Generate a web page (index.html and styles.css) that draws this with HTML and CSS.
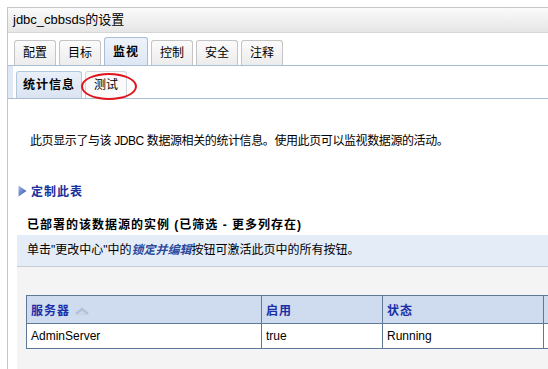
FILE: index.html
```html
<!DOCTYPE html>
<html lang="zh-CN">
  <head>
    <meta charset="UTF-8" />
    <title>jdbc_cbbsds的设置</title>
    <link rel="stylesheet" href="styles.css">
  </head>
  <body>
    <div class="frame">
      <div class="title_bar">jdbc_cbbsds的设置</div>
      <div class="tabs">
        <div class="tab">配置</div>
        <div class="tab">目标</div>
        <div class="tab active">监视</div>
        <div class="tab">控制</div>
        <div class="tab">安全</div>
        <div class="tab">注释</div>
      </div>
      <div class="subtabs">
        <div class="subtab active">统计信息</div>
        <div class="subtab">测试<span class="circle"></span></div>
      </div>
      <p class="intro">此页显示了与该 JDBC 数据源相关的统计信息。使用此页可以监视数据源的活动。</p>
      <div class="customize">
        <svg width="9" height="12" viewBox="0 0 9 12">
          <defs>
            <linearGradient id="arrow" x1="0" y1="0" x2="1" y2="1">
              <stop offset="0" stop-color="#a8c0ea" />
              <stop offset="1" stop-color="#2448a8" />
            </linearGradient>
          </defs>
          <path d="M0.5 0.5 L8.5 6 L0.5 11.5 Z" fill="url(#arrow)" />
        </svg>
        <span>定制此表</span>
      </div>
      <h2 class="section_title">已部署的该数据源的实例 (已筛选 - 更多列存在)</h2>
      <div class="info_bar">单击"更改中心"中的<em>锁定并编辑</em>按钮可激活此页中的所有按钮。</div>
      <div class="table_area">
        <table class="grid">
          <thead>
            <tr>
              <th class="c1">服务器 <svg width="16" height="10" viewBox="0 0 16 10"><path d="M2 7 L8 2 L14 7" fill="none" stroke="#b4c0d6" stroke-width="2.4" /><path d="M5 8.5 L8 6 L11 8.5" fill="none" stroke="#c8d2e4" stroke-width="1.5" /></svg></th>
              <th class="c2">启用</th>
              <th class="c3">状态</th>
              <th class="c4">连接</th>
            </tr>
          </thead>
          <tbody>
            <tr>
              <td>AdminServer</td>
              <td>true</td>
              <td>Running</td>
              <td>0</td>
            </tr>
          </tbody>
        </table>
      </div>
    </div>
  </body>
</html>
```

FILE: styles.css
```css
body {
  margin: 0;
  background-color: #fff;
  font-family: "Liberation Sans", "Noto Sans CJK SC", sans-serif;
  font-size: 12px;
  color: #000;
  overflow: hidden;
}
.frame {
  margin: 7px 0 0 7px;
  border-left: 1px solid #c4c4c4;
  border-top: 1px solid #c8c8c8;
  height: 362px;
}
.title_bar {
  height: 24px;
  line-height: 24px;
  padding-left: 5px;
  font-size: 13px;
  background: linear-gradient(#fafafa, #e6e6e6);
  border-bottom: 1px solid #d6d6d6;
}
.tabs {
  display: flex;
  align-items: flex-end;
  height: 32px;
  padding-left: 6px;
}
.tab {
  height: 24px;
  line-height: 24px;
  padding: 0 8px;
  margin-right: 3px;
  border: 1px solid #c4c4c4;
  border-bottom: none;
  border-radius: 3px 3px 0 0;
  background: linear-gradient(#fbfbfb, #ececec);
}
.tab.active {
  height: 27px;
  line-height: 28px;
  font-weight: bold;
  letter-spacing: 1px;
  background: linear-gradient(#eef3fa, #dde7f3);
  border-color: #a9bed6;
}
.subtabs {
  position: relative;
  display: flex;
  align-items: flex-end;
  height: 32px;
  padding-left: 8px;
  border-top: 1px solid #a9bed6;
  border-bottom: 1px solid #a9bed6;
  background: linear-gradient(90deg, #dfe8f4 0, #dfe8f4 5px, #fff 5px);
}
.subtab {
  position: relative;
  height: 26px;
  line-height: 26px;
  padding: 0 8px;
  margin-right: 3px;
  border: 1px solid #cfd6de;
  border-bottom: none;
  border-radius: 3px 3px 0 0;
  background: #fafafa;
}
.subtab.active {
  padding: 0 6px;
  font-weight: bold;
  letter-spacing: 1px;
  background: linear-gradient(#eaf0f8, #dae4f1);
  border-color: #b5c6da;
}
.circle {
  position: absolute;
  left: -5px;
  top: 1px;
  width: 52px;
  height: 23px;
  border: 2px solid #e0141c;
  border-radius: 50%;
}
.intro {
  margin: 34px 0 0 22px;
  line-height: 16px;
  letter-spacing: -0.4px;
}
.customize {
  display: flex;
  align-items: center;
  gap: 4px;
  margin: 33px 0 0 10px;
  font-weight: bold;
  letter-spacing: 1px;
  color: #15309a;
}
.section_title {
  margin: 18px 0 0 19px;
  font-size: 12px;
  line-height: 16px;
  letter-spacing: 1px;
}
.info_bar {
  margin: 2px 0 0 9px;
  height: 31px;
  line-height: 31px;
  padding-left: 10px;
  background-color: #e4ecf8;
  border-bottom: 1px solid #c8ccd6;
  white-space: nowrap;
}
.info_bar em {
  color: #2c4a9c;
  font-weight: bold;
  font-style: italic;
}
.table_area {
  margin-left: 9px;
  padding: 28px 0 0 9px;
  height: 100px;
  background-color: #f4f4f4;
}
.grid {
  border-collapse: collapse;
  table-layout: fixed;
  width: 600px;
  background-color: #fff;
}
.grid th,
.grid td {
  border: 1px solid #5f7897;
  text-align: left;
  padding: 0 4px;
  white-space: nowrap;
  overflow: hidden;
}
.grid th {
  height: 27px;
  background-color: #cfdcef;
  color: #1a2fa8;
  font-weight: bold;
  letter-spacing: 1px;
}
.grid th svg {
  vertical-align: middle;
}
.grid td {
  height: 24px;
}
.c1 { width: 226px; }
.c2 { width: 112px; }
.c3 { width: 152px; }
.c4 { width: 100px; }
```
